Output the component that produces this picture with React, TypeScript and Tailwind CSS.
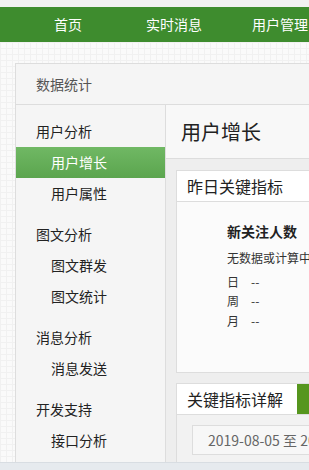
import React from 'react';

const navItems = ['首页', '实时消息', '用户管理', '素材管理'];

const menuGroups = [
  { title: '用户分析', items: ['用户增长', '用户属性'] },
  { title: '图文分析', items: ['图文群发', '图文统计'] },
  { title: '消息分析', items: ['消息发送'] },
  { title: '开发支持', items: ['接口分析'] },
];

const App: React.FC = () => {
  const active = '用户增长';

  return (
    <div className="w-[309px] h-[470px] overflow-hidden font-['Microsoft_YaHei','Noto_Sans_CJK_SC',sans-serif] bg-[#fafafa] bg-[linear-gradient(#f1f1f1_1px,transparent_1px),linear-gradient(90deg,#f1f1f1_1px,transparent_1px)] bg-[size:6px_6px]">
      <div className="h-[7px] bg-[#f1f1f1]" />
      <nav className="h-[35px] bg-[#3e8c2e] flex pl-[15px] whitespace-nowrap">
        {navItems.map((n) => (
          <div key={n} className="w-[106px] shrink-0 text-center text-white text-[14px] leading-[35px]">
            {n}
          </div>
        ))}
      </nav>

      <div className="h-[420px] pt-[21px] pl-[15px] overflow-hidden">
        <div className="w-[420px] border border-[#dddddd] bg-white">
          <div className="h-[41px] bg-[#f5f5f5] border-b border-[#dddddd] pl-[20px] flex items-center text-[14px] text-[#555555]">
            数据统计
          </div>
          <div className="flex h-[380px]">
            <aside className="w-[150px] shrink-0 bg-[#f5f5f5] border-r border-[#dddddd] pt-[11px]">
              {menuGroups.map((g) => (
                <div key={g.title} className="mb-[10px]">
                  <div className="h-[31px] leading-[31px] pl-[20px] text-[14px] text-[#222222]">{g.title}</div>
                  {g.items.map((it) => (
                    <div
                      key={it}
                      className={
                        it === active
                          ? 'h-[31px] leading-[31px] pl-[35px] text-[14px] text-white bg-linear-to-b from-[#70b864] to-[#5ba54e]'
                          : 'h-[31px] leading-[31px] pl-[35px] text-[14px] text-[#222222]'
                      }
                    >
                      {it}
                    </div>
                  ))}
                </div>
              ))}
            </aside>

            <main className="flex-1 bg-[#eeeeee]">
              <div className="h-[54px] bg-[#f8f8f8] border-b border-[#dddddd] pl-[15px] flex items-center text-[20px] text-[#222222]">
                用户增长
              </div>
              <div className="pt-[11px] pl-[10px]">
                <div className="border border-[#dddddd] bg-[#fbfbfb]">
                  <div className="h-[31px] border-b border-[#dddddd] bg-white pl-[10px] flex items-center text-[16px] text-[#222222]">
                    昨日关键指标
                  </div>
                  <div className="h-[170px] pl-[50px] pt-[19px] whitespace-nowrap">
                    <div className="text-[14px] leading-[20px] font-bold text-[#222222]">新关注人数</div>
                    <div className="mt-[7px] text-[12px] leading-[20px] text-[#333333]">无数据或计算中</div>
                    <div className="mt-[4px] text-[12px] text-[#333333]">
                      {['日', '周', '月'].map((d) => (
                        <div key={d} className="flex h-[19.5px] items-center">
                          <span className="w-[24px]">{d}</span>
                          <span>--</span>
                        </div>
                      ))}
                    </div>
                  </div>
                </div>

                <div className="mt-[10px] border border-[#dddddd] bg-[#f2f2f2]">
                  <div className="h-[31px] border-b border-[#dddddd] bg-white flex items-stretch">
                    <div className="w-[120px] pl-[10px] flex items-center text-[16px] text-[#222222] whitespace-nowrap">
                      关键指标详解
                    </div>
                    <div className="w-[80px] bg-[#56961e]" />
                  </div>
                  <div className="pt-[10px] pl-[15px] h-[60px]">
                    <div className="w-[240px] h-[30px] border border-[#dddddd] bg-[#f7f7f7] pl-[15px] flex items-center text-[14px] text-[#666666] whitespace-nowrap">
                      2019-08-05 至 2019-08-11
                    </div>
                  </div>
                </div>
              </div>
            </main>
          </div>
        </div>
      </div>
      <div className="h-[8px] bg-[#e6eaee] border-t border-[#d8dde2]" />
    </div>
  );
};

export default App;
